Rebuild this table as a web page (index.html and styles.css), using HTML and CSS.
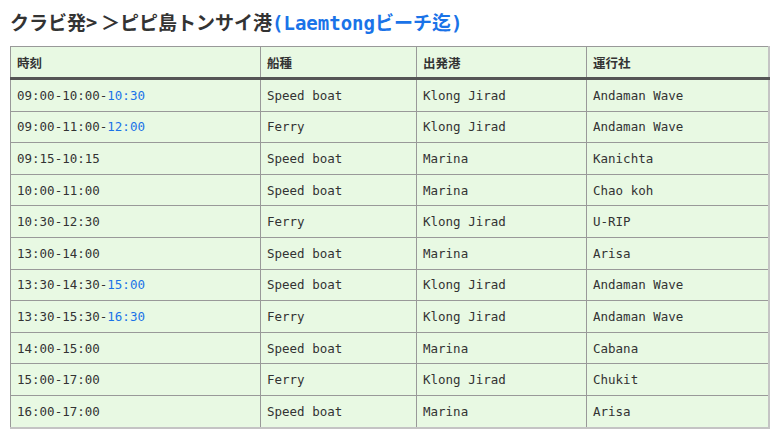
FILE: index.html
```html
<!DOCTYPE html>
<html>
<head>
<meta charset="utf-8">
<link rel="stylesheet" href="styles.css">
</head>
<body>
  <h2 class="title">クラビ発>&#8201;＞ピピ島トンサイ港<span class="note">(Laemtongビーチ迄)</span></h2>
  <table class="times">
    <thead>
      <tr><th class="c1">時刻</th><th class="c2">船種</th><th class="c3">出発港</th><th>運行社</th></tr>
    </thead>
    <tbody>
      <tr><td>09:00-10:00-<span class="note">10:30</span></td><td>Speed boat</td><td>Klong Jirad</td><td>Andaman Wave</td></tr>
      <tr><td>09:00-11:00-<span class="note">12:00</span></td><td>Ferry</td><td>Klong Jirad</td><td>Andaman Wave</td></tr>
      <tr><td>09:15-10:15</td><td>Speed boat</td><td>Marina</td><td>Kanichta</td></tr>
      <tr><td>10:00-11:00</td><td>Speed boat</td><td>Marina</td><td>Chao koh</td></tr>
      <tr><td>10:30-12:30</td><td>Ferry</td><td>Klong Jirad</td><td>U-RIP</td></tr>
      <tr><td>13:00-14:00</td><td>Speed boat</td><td>Marina</td><td>Arisa</td></tr>
      <tr><td>13:30-14:30-<span class="note">15:00</span></td><td>Speed boat</td><td>Klong Jirad</td><td>Andaman Wave</td></tr>
      <tr><td>13:30-15:30-<span class="note">16:30</span></td><td>Ferry</td><td>Klong Jirad</td><td>Andaman Wave</td></tr>
      <tr><td>14:00-15:00</td><td>Speed boat</td><td>Marina</td><td>Cabana</td></tr>
      <tr><td>15:00-17:00</td><td>Ferry</td><td>Klong Jirad</td><td>Chukit</td></tr>
      <tr><td>16:00-17:00</td><td>Speed boat</td><td>Marina</td><td>Arisa</td></tr>
    </tbody>
  </table>
</body>
</html>
```

FILE: styles.css
```css
body { margin: 0; padding: 0 10px; background: #fff; color: #333;
       font-family: "DejaVu Sans Mono", "Noto Sans CJK JP", monospace; font-size: 12.5px; }
.title { margin: 0; padding: 10px 0 11px; font-family: "Noto Sans CJK JP", sans-serif;
         font-size: 19px; font-weight: bold; line-height: 24px; color: #333; }
.title .note { font-family: "DejaVu Sans Mono", "Noto Sans CJK JP", monospace; }
.note { color: #1a73e8; }
.times { width: 760px; border-collapse: collapse; background: #e8f9e3;
         border: 1px solid #aaa; border-right-width: 2px; border-bottom-width: 2px;
         border-right-color: #c4c4c4; border-bottom-color: #c4c4c4; }
.times th, .times td { border: 1px solid #999; padding: 0 6px; height: 30.6px; text-align: left; }
.times th { font-family: "Noto Sans CJK JP", sans-serif; font-weight: bold; font-size: 12.5px;
            height: 30px; border-bottom: 3px solid #555; }
.c1 { width: 237px; }
.c2 { width: 143px; }
.c3 { width: 157px; }
```
